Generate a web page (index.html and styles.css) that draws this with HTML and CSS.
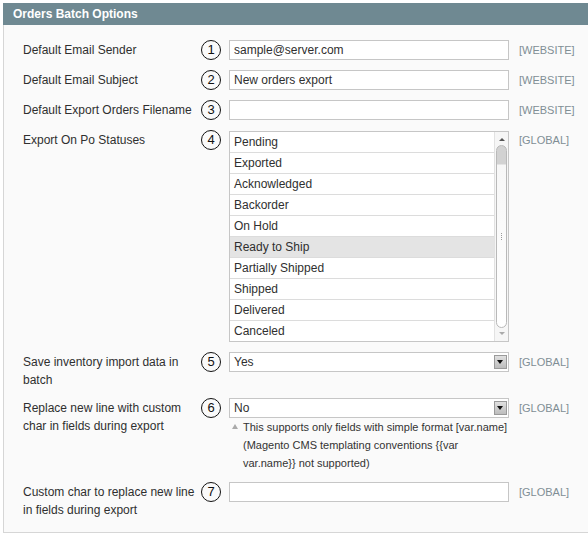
FILE: index.html
```html
<!DOCTYPE html>
<html lang="en">
<head>
<meta charset="UTF-8">
<title>Orders Batch Options</title>
<link rel="stylesheet" href="styles.css">
</head>
<body>
<div class="section">
    <div class="section-head">Orders Batch Options</div>
    <div class="section-body">
        <div class="row">
            <label class="row-label">Default Email Sender</label>
            <span class="num">1</span>
            <div class="row-value"><input class="text-input" type="text" value="sample@server.com"></div>
            <span class="scope">[WEBSITE]</span>
        </div>
        <div class="row">
            <label class="row-label">Default Email Subject</label>
            <span class="num">2</span>
            <div class="row-value"><input class="text-input" type="text" value="New orders export"></div>
            <span class="scope">[WEBSITE]</span>
        </div>
        <div class="row">
            <label class="row-label">Default Export Orders Filename</label>
            <span class="num">3</span>
            <div class="row-value"><input class="text-input" type="text" value=""></div>
            <span class="scope">[WEBSITE]</span>
        </div>
        <div class="row">
            <label class="row-label">Export On Po Statuses</label>
            <span class="num">4</span>
            <div class="row-value">
                <div class="multi">
                    <ul class="multi-list">
                        <li>Pending</li>
                        <li>Exported</li>
                        <li>Acknowledged</li>
                        <li>Backorder</li>
                        <li>On Hold</li>
                        <li class="selected">Ready to Ship</li>
                        <li>Partially Shipped</li>
                        <li>Shipped</li>
                        <li>Delivered</li>
                        <li>Canceled</li>
                    </ul>
                    <div class="scrollbar">
                        <span class="arrow-up"></span>
                        <div class="thumb"><span class="grip"></span></div>
                        <span class="arrow-down"></span>
                    </div>
                </div>
            </div>
            <span class="scope">[GLOBAL]</span>
        </div>
        <div class="row">
            <label class="row-label">Save inventory import data in batch</label>
            <span class="num">5</span>
            <div class="row-value">
                <div class="select">
                    <span>Yes</span>
                    <span class="select-btn"></span>
                </div>
            </div>
            <span class="scope">[GLOBAL]</span>
        </div>
        <div class="row">
            <label class="row-label">Replace new line with custom char in fields during export</label>
            <span class="num">6</span>
            <div class="row-value">
                <div class="select">
                    <span>No</span>
                    <span class="select-btn"></span>
                </div>
                <p class="note">This supports only fields with simple format [var.name] (Magento CMS templating conventions {{var var.name}} not supported)</p>
            </div>
            <span class="scope">[GLOBAL]</span>
        </div>
        <div class="row">
            <label class="row-label">Custom char to replace new line in fields during export</label>
            <span class="num">7</span>
            <div class="row-value"><input class="text-input" type="text" value=""></div>
            <span class="scope">[GLOBAL]</span>
        </div>
    </div>
</div>
</body>
</html>
```

FILE: styles.css
```css
body {
    font-family: "Liberation Sans", Arial, sans-serif;
    font-size: 12px;
    color: #2f2f2f;
    margin: 0;
    padding: 0;
    background-color: #fff;
    overflow: hidden;
}
.section {
    width: 600px;
    margin: 3px 0 0 3px;
}
.section-head {
    background-color: #6f8992;
    color: #fff;
    font-weight: bold;
    height: 22px;
    line-height: 22px;
    padding-left: 10px;
}
.section-body {
    background-color: #fafafa;
    border-left: 1px solid #d6d6d6;
    border-bottom: 1px solid #d6d6d6;
    padding: 15px 0 14px 19px;
}
.row {
    display: grid;
    grid-template-columns: 178px 28px 280px auto;
    align-items: start;
    margin-bottom: 10px;
}
.row:last-child {
    margin-bottom: 0;
}
.row-label {
    line-height: 18px;
    padding-top: 1px;
    margin-bottom: -1px;
}
.num {
    width: 20px;
    height: 20px;
    box-sizing: border-box;
    border: 1.5px solid #111;
    border-radius: 50%;
    font-size: 13px;
    line-height: 17px;
    text-align: center;
    color: #111;
}
.text-input {
    display: block;
    width: 100%;
    height: 20px;
    margin: 0;
    padding: 0 4px;
    border: 1px solid #c6c6c6;
    background-color: #fff;
    box-sizing: border-box;
    font-family: "Liberation Sans", Arial, sans-serif;
    font-size: 12px;
    color: #2f2f2f;
    outline: none;
}
.scope {
    padding-left: 10px;
    font-size: 11px;
    line-height: 20px;
    color: #808e95;
}
.multi {
    display: flex;
    margin-top: 1px;
    border: 1px solid #c6c6c6;
    background-color: #fff;
}
.multi-list {
    flex: 1;
    list-style: none;
    margin: 0;
    padding: 0;
}
.multi-list li {
    height: 20px;
    line-height: 20px;
    padding-left: 4px;
    border-bottom: 1px solid #dcdcdc;
}
.multi-list li:last-child {
    border-bottom: none;
}
.multi-list li.selected {
    background-color: #e4e4e4;
}
.scrollbar {
    width: 13px;
    display: flex;
    flex-direction: column;
    align-items: center;
    background-color: #f6f6f6;
    border-left: 1px solid #e2e2e2;
}
.arrow-up,
.arrow-down {
    width: 0;
    height: 0;
    border-left: 3px solid transparent;
    border-right: 3px solid transparent;
}
.arrow-up {
    margin: 6px 0 4px;
    border-bottom: 3px solid #555;
}
.arrow-down {
    margin: 4px 0 6px;
    border-top: 3px solid #aaa;
}
.thumb {
    flex: 1;
    width: 11px;
    box-sizing: border-box;
    border: 1px solid #b9b9b9;
    border-radius: 6px;
    background: linear-gradient(#d2d2d2 0, #d2d2d2 18px, #f7f7f7 19px, #fff 100%);
    display: flex;
    align-items: center;
    justify-content: center;
}
.grip {
    width: 1px;
    height: 7px;
    border-left: 1px dotted #999;
}
.select {
    display: flex;
    align-items: center;
    justify-content: space-between;
    height: 20px;
    box-sizing: border-box;
    border: 1px solid #c6c6c6;
    background-color: #fff;
    padding: 0 1px 0 4px;
}
.select-btn {
    position: relative;
    width: 13px;
    height: 14px;
    background: linear-gradient(#e0e0e0, #bdbdbd);
    border: 1px solid #9a9a9a;
    box-sizing: border-box;
}
.select-btn::after {
    content: "";
    position: absolute;
    left: 2px;
    top: 4px;
    border-left: 3.5px solid transparent;
    border-right: 3.5px solid transparent;
    border-top: 4px solid #111;
}
.note {
    margin: 0;
    padding-left: 14px;
    position: relative;
    font-size: 11px;
    line-height: 18px;
    color: #333;
}
.note::before {
    content: "";
    position: absolute;
    left: 3px;
    top: 6px;
    border-left: 3px solid transparent;
    border-right: 3px solid transparent;
    border-bottom: 5px solid #aaa;
}
```
